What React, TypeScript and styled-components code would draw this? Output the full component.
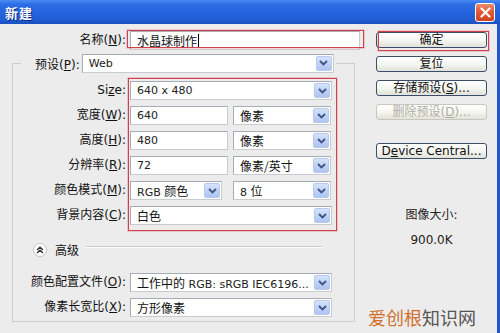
import React from "react";
import styled, { createGlobalStyle } from "styled-components";

const Global = createGlobalStyle`
  html, body { margin: 0; padding: 0; background: #ececec; }
  body { font-family: "DejaVu Sans", "Noto Sans CJK SC", sans-serif; color: #000; }
  * { box-sizing: border-box; }
`;

const Window = styled.div`
  width: 500px;
  height: 333px;
  overflow: hidden;
  position: relative;
  display: flex;
  flex-direction: column;
  background: #ececec;
`;

const TitleBar = styled.div`
  height: 24px;
  flex: none;
  display: flex;
  align-items: center;
  justify-content: space-between;
  padding: 0 5px 0 5px;
  background: linear-gradient(to bottom, #4b8cf2 0%, #2d6de4 18%, #2463dc 55%, #1f5bd2 85%, #1a4fbf 100%);
`;

const Title = styled.span`
  color: #fff;
  font: bold 13px "Noto Sans CJK SC", sans-serif;
  text-shadow: 1px 1px 0 #0b2d85;
  letter-spacing: 1px;
`;

const CloseBtn = styled.div`
  width: 20px;
  height: 19px;
  border: 1px solid #fff;
  border-radius: 3px;
  background: linear-gradient(to bottom, #ec8a6a 0%, #e25a36 45%, #cc4420 100%);
  display: flex;
  align-items: center;
  justify-content: center;
`;

const Body = styled.div`
  flex: 1;
  display: flex;
  padding-top: 7px;
  border-right: 3px solid #2058d4;
`;

const LeftCol = styled.div`
  width: 365px;
  flex: none;
  display: flex;
  flex-direction: column;
`;

const NameRow = styled.div`
  display: flex;
  align-items: center;
  height: 19px;
`;

const Label = styled.div<{ $w: number }>`
  width: ${(p) => p.$w}px;
  flex: none;
  text-align: right;
  font-size: 12px;
  line-height: 19px;
  white-space: nowrap;
  color: #111;
  u { text-decoration: underline; }
`;

const Marked = styled.div<{ $t: number; $r: number; $b: number; $l: number }>`
  position: relative;
  &::after {
    content: "";
    position: absolute;
    top: ${(p) => p.$t}px;
    right: ${(p) => p.$r}px;
    bottom: ${(p) => p.$b}px;
    left: ${(p) => p.$l}px;
    border: 1px solid #d2404e;
    box-shadow: 0 0 0 0.5px rgba(210, 64, 78, 0.45);
    pointer-events: none;
  }
`;

const TextBox = styled.div<{ $w: number }>`
  width: ${(p) => p.$w}px;
  height: 19px;
  background: #fff;
  border: 1px solid #a5acb6;
  border-right-color: #c8ccd2;
  border-bottom-color: #c8ccd2;
  display: flex;
  align-items: center;
  padding-left: 6px;
  font-size: 11px;
  color: #222;
  white-space: nowrap;
  overflow: hidden;
`;

const CjkText = styled.span`
  font-family: "Noto Sans CJK SC", sans-serif;
  font-size: 12px;
  color: #111;
`;

const Caret = styled.span`
  display: inline-block;
  width: 1px;
  height: 14px;
  background: #000;
  margin-left: 1px;
`;

const SelectBox = styled.div<{ $w: number }>`
  width: ${(p) => p.$w}px;
  height: 19px;
  flex: none;
  background: #fff;
  border: 1px solid #a5acb6;
  border-right-color: #c8ccd2;
  border-bottom-color: #c8ccd2;
  display: flex;
  align-items: center;
  padding: 1px;
  font-size: 11px;
  color: #222;
`;

const SelectText = styled.span`
  flex: 1;
  padding-left: 5px;
  white-space: nowrap;
  overflow: hidden;
`;

const ArrowBtn = styled.span`
  width: 16px;
  height: 15px;
  flex: none;
  border-radius: 2px;
  background: linear-gradient(to bottom, #d5e2fb 0%, #bcd0f6 60%, #aec5f1 100%);
  border: 1px solid #b7c9ee;
  display: flex;
  align-items: center;
  justify-content: center;
`;

const Chevron = () => (
  <svg width="9" height="6" viewBox="0 0 9 6">
    <path d="M1 1 L4.5 4.5 L8 1" fill="none" stroke="#3d5480" strokeWidth="1.8" />
  </svg>
);

const Select = ({ w, children }: { w: number; children?: React.ReactNode }) => (
  <SelectBox $w={w}>
    <SelectText>{children}</SelectText>
    <ArrowBtn>
      <Chevron />
    </ArrowBtn>
  </SelectBox>
);

const Group = styled.fieldset`
  margin: 4px 0 0 12px;
  width: 343px;
  padding: 0 0 4px 0;
  border: 1px solid #cfcfcf;
  min-inline-size: 0;
`;

const Legend = styled.legend`
  margin-left: 8px;
  padding: 0 2px 0 14px;
  display: flex;
  align-items: center;
  height: 18px;
`;

const LegendLabel = styled.span`
  font-size: 12px;
  margin-right: 2px;
  white-space: nowrap;
  color: #111;
`;

const SizeBlock = styled.div`
  display: flex;
  margin-top: 6px;
`;

const LabelCol = styled.div`
  width: 113px;
  flex: none;
  display: flex;
  flex-direction: column;
  gap: 6px;
  padding-top: 3px;
`;

const RedBox = styled.div`
  margin-left: 2px;
  border: 1px solid #d2404e;
  box-shadow: 0 0 0 0.5px rgba(210, 64, 78, 0.45);
  padding: 2px 4px 5px 1px;
  display: flex;
  flex-direction: column;
  gap: 6px;
`;

const CtrlRow = styled.div<{ $gap: number }>`
  display: flex;
  gap: ${(p) => p.$gap}px;
`;

const AdvancedRow = styled.div`
  display: flex;
  align-items: center;
  height: 13px;
  margin-top: 12px;
  padding-left: 20px;
`;

const Toggle = styled.span`
  width: 14px;
  height: 14px;
  flex: none;
  border-radius: 50%;
  background: #fff;
  border: 1px solid #c4c4c4;
  display: flex;
  align-items: center;
  justify-content: center;
`;

const AdvText = styled.span`
  font-size: 12px;
  margin-left: 8px;
  color: #111;
`;

const Rule = styled.span`
  flex: 1;
  height: 2px;
  margin: 0 32px 0 7px;
  border-top: 1px solid #c9c9c9;
  border-bottom: 1px solid #fff;
  align-self: flex-start;
  margin-top: 3px;
`;

const FieldRows = styled.div`
  display: flex;
  flex-direction: column;
  gap: 6px;
  margin-top: 17px;
`;

const FieldRow = styled.div`
  display: flex;
  gap: 4px;
`;

const RightCol = styled.div`
  width: 111px;
  margin-left: 11px;
  display: flex;
  flex-direction: column;
  padding-top: 1px;
`;

const Button = styled.div<{ $disabled?: boolean; $mt?: number }>`
  height: 16px;
  margin-top: ${(p) => p.$mt ?? 0}px;
  border: 1px solid ${(p) => (p.$disabled ? "#c9c7bd" : "#3a4e68")};
  border-radius: 3px;
  background: linear-gradient(to bottom, #ffffff 0%, #f4f4f0 55%, #e2e2da 100%);
  display: flex;
  align-items: center;
  justify-content: center;
  font-size: 12px;
  line-height: 1;
  white-space: nowrap;
  color: ${(p) => (p.$disabled ? "#b0aea2" : "#111")};
`;

const InfoLabel = styled.div<{ $mt: number }>`
  margin-top: ${(p) => p.$mt}px;
  height: 16px;
  line-height: 16px;
  text-align: center;
  font-size: 12px;
  color: #222;
`;

const Watermark = styled.div`
  position: absolute;
  right: 24px;
  bottom: 5px;
  font-family: "Noto Sans CJK SC", sans-serif;
  font-size: 18px;
  line-height: 22px;
  color: #555;
  letter-spacing: 0;
`;

const Orange = styled.span`
  color: #d0702e;
`;

const L = ({ t, k, rest }: { t: string; k: string; rest?: string }) => (
  <>
    {t}(<u>{k}</u>){rest ?? ":"}
  </>
);

export default function App() {
  return (
    <>
      <Global />
      <Window>
        <TitleBar>
          <Title>新建</Title>
          <CloseBtn>
            <svg width="11" height="11" viewBox="0 0 11 11">
              <path d="M1.5 1.5 L9.5 9.5 M9.5 1.5 L1.5 9.5" stroke="#fff" strokeWidth="2.2" strokeLinecap="round" />
            </svg>
          </CloseBtn>
        </TitleBar>
        <Body>
          <LeftCol>
            <NameRow>
              <Label $w={126}>
                <L t="名称" k="N" />
              </Label>
              <Marked $t={-1} $r={-4} $b={2} $l={-3} style={{ marginLeft: 4 }}>
                <TextBox $w={230}>
                  <CjkText>水晶球制作</CjkText>
                  <Caret />
                </TextBox>
              </Marked>
            </NameRow>

            <Group>
              <Legend>
                <LegendLabel>
                  <L t="预设" k="P" />
                </LegendLabel>
                <Select w={252}>Web</Select>
              </Legend>

              <SizeBlock>
                <LabelCol>
                  <Label $w={113}>
                    Si<u>z</u>e:
                  </Label>
                  <Label $w={113}>
                    <L t="宽度" k="W" />
                  </Label>
                  <Label $w={113}>
                    <L t="高度" k="H" />
                  </Label>
                  <Label $w={113}>
                    <L t="分辨率" k="R" />
                  </Label>
                  <Label $w={113}>
                    <L t="颜色模式" k="M" />
                  </Label>
                  <Label $w={113}>
                    <L t="背景内容" k="C" />
                  </Label>
                </LabelCol>
                <RedBox>
                  <Select w={202}>640 x 480</Select>
                  <CtrlRow $gap={5}>
                    <TextBox $w={98}>640</TextBox>
                    <Select w={98}>
                      <CjkText>像素</CjkText>
                    </Select>
                  </CtrlRow>
                  <CtrlRow $gap={5}>
                    <TextBox $w={98}>480</TextBox>
                    <Select w={98}>
                      <CjkText>像素</CjkText>
                    </Select>
                  </CtrlRow>
                  <CtrlRow $gap={5}>
                    <TextBox $w={98}>72</TextBox>
                    <Select w={98}>
                      <CjkText>像素/英寸</CjkText>
                    </Select>
                  </CtrlRow>
                  <CtrlRow $gap={11}>
                    <Select w={92}>
                      RGB <CjkText>颜色</CjkText>
                    </Select>
                    <Select w={98}>
                      8 <CjkText>位</CjkText>
                    </Select>
                  </CtrlRow>
                  <Select w={202}>
                    <CjkText>白色</CjkText>
                  </Select>
                </RedBox>
              </SizeBlock>

              <AdvancedRow>
                <Toggle>
                  <svg width="8" height="8" viewBox="0 0 8 8">
                    <path d="M1 4 L4 1.2 L7 4 M1 7 L4 4.2 L7 7" fill="none" stroke="#333" strokeWidth="1.3" />
                  </svg>
                </Toggle>
                <AdvText>高级</AdvText>
                <Rule />
              </AdvancedRow>

              <FieldRows>
                <FieldRow>
                  <Label $w={113}>
                    <L t="颜色配置文件" k="O" />
                  </Label>
                  <Select w={202}>
                    <CjkText>工作中的</CjkText> RGB: sRGB IEC6196...
                  </Select>
                </FieldRow>
                <FieldRow>
                  <Label $w={113}>
                    <L t="像素长宽比" k="X" />
                  </Label>
                  <Select w={202}>
                    <CjkText>方形像素</CjkText>
                  </Select>
                </FieldRow>
              </FieldRows>
            </Group>
          </LeftCol>

          <RightCol>
            <Marked $t={-1} $r={-2} $b={-3} $l={2}>
              <Button>确定</Button>
            </Marked>
            <Button $mt={8}>复位</Button>
            <Button $mt={8}>
              存储预设(<u>S</u>)...
            </Button>
            <Button $mt={8} $disabled>
              删除预设(<u>D</u>)...
            </Button>
            <Button $mt={23}>
              D<u>e</u>vice Central...
            </Button>
            <InfoLabel $mt={48}>图像大小:</InfoLabel>
            <InfoLabel $mt={9}>900.0K</InfoLabel>
          </RightCol>
        </Body>
        <Watermark>
          <Orange>爱创根</Orange>知识网
        </Watermark>
      </Window>
    </>
  );
}
